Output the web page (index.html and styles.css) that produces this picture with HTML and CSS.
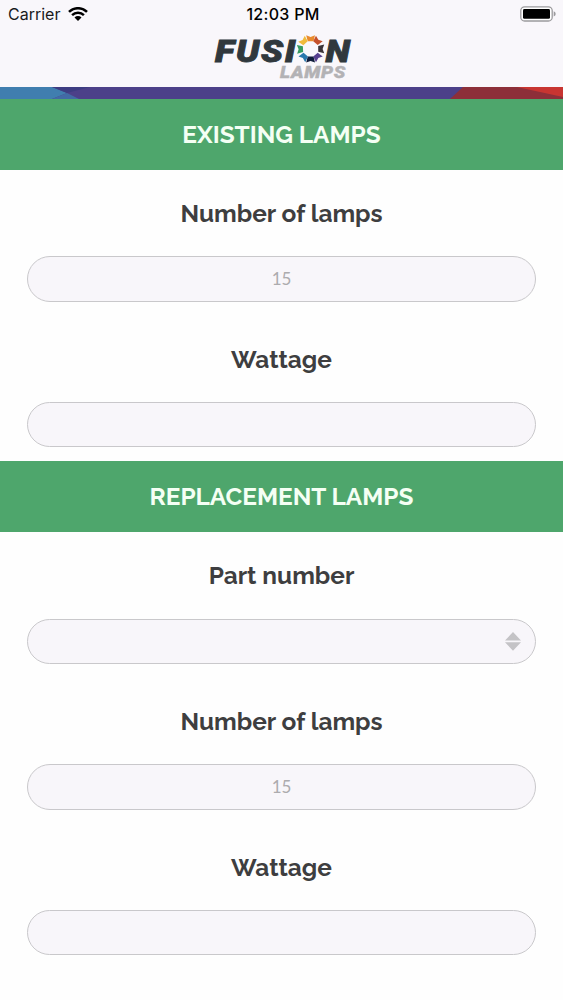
FILE: index.html
```
<!DOCTYPE html>
<html lang="en">

<head>
    <meta charset="UTF-8">
    <meta name="viewport" content="width=device-width, initial-scale=1.0">
    <title>Fusion Lamps</title>
    <link rel="stylesheet" href="styles.css">
</head>

<body>
    <header>
        <div class="status-bar">
            <div class="carrier">
                <span>Carrier</span>
                <svg width="20" height="14" viewBox="0 0 20 14">
                    <g fill="none" stroke="#000" stroke-width="2.5">
                        <path d="M1 4.9a12.8 12.8 0 0 1 18 0"/>
                        <path d="M4.1 8.1a8.4 8.4 0 0 1 11.8 0"/>
                    </g>
                    <path d="M6.5 10.4a5 5 0 0 1 7 0L10 13.9z"/>
                </svg>
            </div>
            <span class="time">12:03 PM</span>
            <svg class="battery" width="36" height="16" viewBox="0 0 36 16">
                <rect x=".8" y=".8" width="31.4" height="14.2" rx="3.8" fill="#fff" stroke="#9b9a9d" stroke-width="1.3"/>
                <rect x="3" y="3" width="27" height="9.8" rx="1.4"/>
                <path d="M33.7 5.3q2 .8 2 2.6t-2 2.6z" fill="#9b9a9d"/>
            </svg>
        </div>
        <svg class="logo" width="144" height="52" viewBox="211 34 144 52">
            <g class="logo-main">
                <text x="215" y="61.5" textLength="82" lengthAdjust="spacingAndGlyphs">FUSI</text>
                <text x="325.5" y="61.5" textLength="26" lengthAdjust="spacingAndGlyphs">N</text>
            </g>
            <text class="logo-sub" x="280" y="77.6" textLength="66" lengthAdjust="spacingAndGlyphs">LAMPS</text>
            <!-- colour wheel used as the letter O -->
            <g transform="translate(310.6 48.9)">
                <path d="M-4.4-13.6L0-12 4.4-13.6 2.9-7.6h-5.8z" fill="#e98b2d"/>
                <path d="M-4.4-13.6L0-12 4.4-13.6 2.9-7.6h-5.8z" fill="#c4502b" transform="rotate(40)"/>
                <path d="M-4.4-13.6L0-12 4.4-13.6 2.9-7.6h-5.8z" fill="#3b3438" transform="rotate(90)"/>
                <path d="M-4.4-13.6L0-12 4.4-13.6 2.9-7.6h-5.8z" fill="#57408f" transform="rotate(140)"/>
                <path d="M-4.4-13.6L0-12 4.4-13.6 2.9-7.6h-5.8z" fill="#101d3c" transform="rotate(180)"/>
                <path d="M-4.4-13.6L0-12 4.4-13.6 2.9-7.6h-5.8z" fill="#2878ad" transform="rotate(220)"/>
                <path d="M-4.4-13.6L0-12 4.4-13.6 2.9-7.6h-5.8z" fill="#359b62" transform="rotate(268)"/>
                <path d="M-4.4-13.6L0-12 4.4-13.6 2.9-7.6h-5.8z" fill="#f0bb3c" transform="rotate(318)"/>
            </g>
        </svg>
    </header>

    <svg class="stripe" viewBox="0 0 563 12" preserveAspectRatio="none">
        <rect width="563" height="12" fill="#4c4089"/>
        <path d="M0 0h52l15 6-15 6H0z" fill="#407eaf"/>
        <path d="M52 0h38L67 6z" fill="#3d3c82"/>
        <path d="M67 6l12 6H52z" fill="#426aa5"/>
        <path d="M463 0h100v12H450z" fill="#8d2f39"/>
        <path d="M517 0h46v10z" fill="#c83531"/>
    </svg>

    <section>
        <h2>EXISTING LAMPS</h2>
        <div class="field">
            <label for="oldCount">Number of lamps</label>
            <input type="text" id="oldCount" placeholder="15">
        </div>
        <div class="field">
            <label for="oldWattage">Wattage</label>
            <input type="text" id="oldWattage">
        </div>
    </section>

    <section>
        <h2>REPLACEMENT LAMPS</h2>
        <div class="field">
            <label for="part">Part number</label>
            <select id="part">
                <option></option>
            </select>
            <svg class="arrows" width="16" height="19" viewBox="0 0 16 19">
                <path d="M8 0l8 8.5H0zM0 10.3h16L8 18.8z" fill="#c4c3c6"/>
            </svg>
        </div>
        <div class="field">
            <label for="newCount">Number of lamps</label>
            <input type="text" id="newCount" placeholder="15">
        </div>
        <div class="field">
            <label for="newWattage">Wattage</label>
            <input type="text" id="newWattage">
        </div>
    </section>
</body>

</html>
```
FILE: styles.css
```
* {
    box-sizing: border-box;
}

body {
    margin: 0;
    background: #fefefe;
    font-family: Raleway, Lato, sans-serif;
    color: #3e3e40;
    overflow: hidden;
}

header {
    height: 87px;
    background: #f9f7fb;
    text-align: center;
}

.status-bar {
    display: grid;
    grid-template-columns: 1fr auto 1fr;
    align-items: center;
    height: 28px;
    padding: 0 7px 0 8px;
    font-family: Inter, sans-serif;
    font-size: 16px;
    color: #1a1a1c;
}

.carrier {
    display: flex;
    align-items: center;
    gap: 8px;
}

.time {
    padding-left: 2px;
    font-weight: 500;
    letter-spacing: 0.3px;
    color: #000;
}

.battery {
    justify-self: end;
}

.logo {
    display: block;
    margin: 6px auto 0;
    position: relative;
    left: 1.5px;
    overflow: visible;
}

.logo-main {
    font: italic 900 31px Roboto, sans-serif;
    letter-spacing: 1.5px;
    fill: #30383d;
    stroke: #30383d;
    stroke-width: 0.9;
}

.logo-sub {
    font: italic 900 16.5px Roboto, sans-serif;
    letter-spacing: 0.6px;
    fill: #b3b2b5;
    stroke: #b3b2b5;
    stroke-width: 0.4;
}

.stripe {
    display: block;
    width: 100%;
    height: 12px;
}

h2 {
    height: 71px;
    margin: 0;
    background: #4ea66c;
    color: #f4fff4;
    font-size: 24.4px;
    font-weight: 700;
    line-height: 72px;
    text-align: center;
}

.field {
    position: relative;
    padding: 0 27px 14px;
}

label {
    display: block;
    height: 86.3px;
    font-size: 24.4px;
    font-weight: 700;
    line-height: 87px;
    text-align: center;
}

input,
select {
    display: block;
    width: 100%;
    height: 45.4px;
    padding: 0 0 1px;
    border: 1px solid #c9c8cb;
    border-radius: 23px;
    background: #f8f6fa;
    font-family: Lato, sans-serif;
    font-size: 17px;
    text-align: center;
    appearance: none;
}

input::placeholder {
    color: #acabae;
}

.arrows {
    position: absolute;
    right: 42px;
    bottom: 27px;
}
```
